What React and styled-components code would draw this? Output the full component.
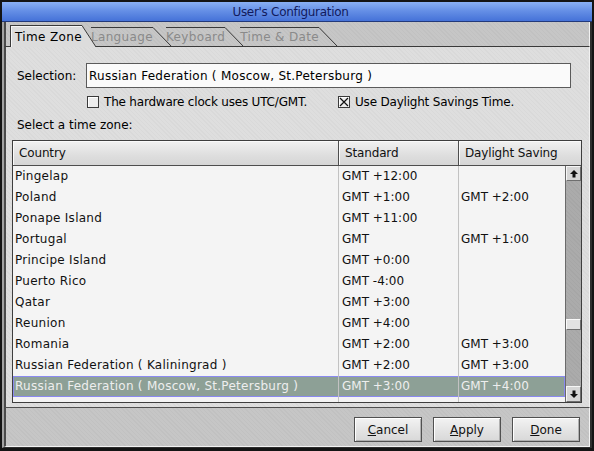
import React from "react";
import styled, { createGlobalStyle, css } from "styled-components";

const GlobalStyle = createGlobalStyle`
  html, body { margin: 0; padding: 0; background: #101010; }
  body {
    font-family: "DejaVu Sans", "Liberation Sans", sans-serif;
    font-size: 12px;
    color: #000;
  }
  * { box-sizing: border-box; }
`;

const lightTex =
  "repeating-linear-gradient(45deg, #d9d9d9 0px, #d9d9d9 1px, #dedede 1px, #dedede 3px)";
const midTex =
  "repeating-linear-gradient(45deg, #c1c1c1 0px, #c1c1c1 1px, #c6c6c6 1px, #c6c6c6 3px)";
const trackTex =
  "repeating-linear-gradient(45deg, #a6a6a6 0px, #a6a6a6 1px, #ababab 1px, #ababab 3px)";

const Window = styled.div`
  width: 594px;
  height: 451px;
  border: 2px solid #141414;
  border-bottom-width: 3px;
  display: flex;
  flex-direction: column;
  background: #c4c4c4;
`;

const TitleBar = styled.div`
  flex: none;
  height: 20px;
  display: flex;
  align-items: center;
  justify-content: center;
  padding-right: 13px;
  background: linear-gradient(#8ab0f4 0%, #6690e6 45%, #4572d8 100%);
  border-bottom: 1px solid #22397a;
  color: #121a5c;
  font-size: 12px;
  letter-spacing: -0.3px;
  line-height: 1;
`;

const Body = styled.div`
  flex: 1;
  min-height: 0;
  display: flex;
  flex-direction: column;
  border-left: 2px solid #a2a2a2;
  border-right: 2px solid #2e2e2e;
  border-bottom: 1px solid #2e2e2e;
`;

const TabBar = styled.div`
  flex: none;
  height: 25px;
  display: flex;
  align-items: flex-end;
  padding-left: 4px;
  background: ${midTex};
  border-left: 2px solid #4a4a4a;
  border-right: 1px solid #f2f2f2;
  border-bottom: 1px solid #3a3a3a;
`;

const TabItem = styled.div`
  flex: none;
  display: flex;
  align-items: stretch;
  height: ${(p) => (p.$active ? 22 : 19)}px;
  margin-left: ${(p) => p.$shift}px;
  margin-bottom: ${(p) => (p.$active ? -1 : 0)}px;
  position: relative;
  z-index: ${(p) => (p.$active ? 2 : 1)};
`;

const TabLabel = styled.div`
  display: flex;
  align-items: center;
  border-top: 1px solid #3a3a3a;
  letter-spacing: 0.35px;
  ${(p) =>
    p.$active
      ? css`
          padding: 0 0 0 4px;
          background: #dcdcdc;
          border-left: 1px solid #3a3a3a;
          box-shadow: inset 1px 1px 0 #f6f6f6;
          color: #000;
        `
      : css`
          padding: 0 0 1px 0;
          background: transparent;
          color: #8a8a8a;
        `}
`;

const SlantSvg = styled.svg`
  display: block;
  flex: none;
`;

function Slant({ active, w, h }) {
  return (
    <SlantSvg width={w} height={h} viewBox={`0 0 ${w} ${h}`}>
      {active && <polygon points={`0,0 ${w},${h} 0,${h}`} fill="#dcdcdc" />}
      <line x1="0" y1="0.5" x2={w} y2={h} stroke="#3a3a3a" strokeWidth="1" />
    </SlantSvg>
  );
}

const Panel = styled.div`
  flex: 1;
  min-height: 0;
  display: flex;
  flex-direction: column;
  background: ${lightTex};
  border-left: 2px solid #4a4a4a;
  border-right: 1px solid #f2f2f2;
  border-bottom: 1px solid #4e4e4e;
  padding: 16px 7px 4px 6px;
`;

const FieldRow = styled.div`
  display: flex;
  align-items: center;
  margin-right: 11px;
`;

const FieldLabel = styled.div`
  width: 74px;
  padding-left: 5px;
  flex: none;
`;

const TextField = styled.input`
  flex: 1;
  height: 25px;
  border: 1px solid #5a5a5a;
  background: #fafafa;
  padding: 0 2px;
  font: inherit;
  font-size: 12px;
  letter-spacing: 0.27px;
  color: #000;
  outline: none;
`;

const CheckRow = styled.div`
  display: flex;
  align-items: center;
  height: 14px;
  margin-top: 7px;
  padding-left: 75px;
`;

const CheckItem = styled.div`
  display: flex;
  align-items: center;
  gap: 5px;
  letter-spacing: -0.2px;
  width: ${(p) => (p.$width ? `${p.$width}px` : "auto")};
`;

const Box = styled.span`
  width: 12px;
  height: 12px;
  flex: none;
  border: 1px solid #3a3a3a;
  background: #ececec;
  box-shadow: inset 1px 1px 0 #ffffff;
  display: flex;
  align-items: center;
  justify-content: center;
`;

function CheckBox({ checked }) {
  return (
    <Box>
      {checked && (
        <svg width="10" height="10" viewBox="0 0 10 10">
          <path d="M1 1 L9 9 M9 1 L1 9" stroke="#111" strokeWidth="1.2" />
        </svg>
      )}
    </Box>
  );
}

const SectionLabel = styled.div`
  margin-top: 9px;
  padding-left: 5px;
  line-height: 14px;
`;

const Table = styled.div`
  flex: 1;
  min-height: 0;
  margin-top: 8px;
  display: flex;
  flex-direction: column;
  border: 1px solid #3e3e3e;
  background: #f4f4f4;
`;

const HeaderRow = styled.div`
  flex: none;
  display: grid;
  grid-template-columns: 326px 120px 1fr;
  height: 25px;
  border-bottom: 1px solid #4e4e4e;
  background: linear-gradient(#f1f1f1, #dedede 60%, #d6d6d6);
`;

const HeaderCell = styled.div`
  display: flex;
  align-items: center;
  padding-left: 6px;
  letter-spacing: -0.15px;
  border-right: ${(p) => (p.$last ? "0" : "1px solid #4e4e4e")};
  box-shadow: inset 1px 1px 0 #fafafa;
  color: #111;
`;

const TableBody = styled.div`
  flex: 1;
  min-height: 0;
  display: flex;
`;

const Rows = styled.div`
  flex: 1;
  min-width: 0;
  display: flex;
  flex-direction: column;
  overflow: hidden;
`;

const Row = styled.div`
  flex: none;
  display: grid;
  grid-template-columns: 326px 120px 1fr;
  height: 21px;
  color: #111;
  ${(p) =>
    p.$selected &&
    css`
      background: #8da096;
      color: #eeeeee;
      box-shadow: inset 0 0 0 1px #8a8af0;
    `}
`;

const FillerRow = styled(Row)`
  flex: 1;
  height: auto;
`;

const Cell = styled.div`
  display: flex;
  align-items: center;
  padding-left: ${(p) => p.$pad || 2}px;
  padding-bottom: 1px;
  white-space: nowrap;
  letter-spacing: ${(p) => (p.$wide ? "0.27px" : "0")};
  border-right: ${(p) => (p.$last ? "0" : "1px solid #c2c2c2")};
`;

const Scrollbar = styled.div`
  flex: none;
  width: 16px;
  display: flex;
  flex-direction: column;
  border-left: 1px solid #6a6a6a;
  background: ${trackTex};
`;

const ScrollButton = styled.div`
  flex: none;
  height: ${(p) => p.$h}px;
  display: flex;
  align-items: center;
  justify-content: center;
  background: #d6d6d6;
  border: 1px solid;
  border-color: #f6f6f6 #6e6e6e #6e6e6e #f6f6f6;
`;

const Track = styled.div`
  flex: 1;
  min-height: 0;
  display: flex;
  flex-direction: column;
`;

const Thumb = styled.div`
  flex: none;
  height: 11px;
  background: #e2e2e2;
  border: 1px solid;
  border-color: #fafafa #6e6e6e #6e6e6e #fafafa;
`;

function Arrow({ down }) {
  return (
    <svg width="8" height="8" viewBox="0 0 8 8" style={down ? { transform: "rotate(180deg)" } : undefined}>
      <polygon points="4,0 8,4 5.5,4 5.5,7.5 2.5,7.5 2.5,4 0,4" fill="#111" />
    </svg>
  );
}

const ButtonBar = styled.div`
  flex: none;
  height: 39px;
  display: flex;
  justify-content: flex-end;
  align-items: flex-start;
  gap: 11px;
  padding: 9px 9px 0 0;
  background: ${midTex};
  border-left: 2px solid #4a4a4a;
  border-right: 1px solid #f2f2f2;
  border-bottom: 1px solid #f2f2f2;
`;

const Button = styled.button`
  width: 68px;
  height: 25px;
  padding: 0;
  font: inherit;
  font-size: 12px;
  color: #111;
  background: linear-gradient(#f3f3f3, #e2e2e2 60%, #d8d8d8);
  border: 1px solid #505050;
  box-shadow: inset 1px 1px 0 #ffffff, inset -1px -1px 0 #b0b0b0;
  cursor: pointer;
`;

const tabs = [
  { label: "Time Zone", active: true, shift: 0 },
  { label: "Language", shift: -5 },
  { label: "Keyboard", shift: -5 },
  { label: "Time & Date", shift: -3 },
];

const zones = [
  ["Pingelap", "GMT +12:00", ""],
  ["Poland", "GMT +1:00", "GMT +2:00"],
  ["Ponape Island", "GMT +11:00", ""],
  ["Portugal", "GMT", "GMT +1:00"],
  ["Principe Island", "GMT +0:00", ""],
  ["Puerto Rico", "GMT -4:00", ""],
  ["Qatar", "GMT +3:00", ""],
  ["Reunion", "GMT +4:00", ""],
  ["Romania", "GMT +2:00", "GMT +3:00"],
  ["Russian Federation ( Kaliningrad )", "GMT +2:00", "GMT +3:00"],
  ["Russian Federation ( Moscow, St.Petersburg )", "GMT +3:00", "GMT +4:00"],
];

const selectedIndex = 10;
const scrollFraction = 0.677;
const trackLength = 204;

export default function App() {
  const thumbTop = Math.round(trackLength * scrollFraction);
  return (
    <>
      <GlobalStyle />
      <Window>
        <TitleBar>User's Configuration</TitleBar>
        <Body>
          <TabBar>
            {tabs.map((t) => (
              <TabItem key={t.label} $active={t.active} $shift={t.shift}>
                <TabLabel $active={t.active}>{t.label}</TabLabel>
                <Slant active={t.active} w={t.active ? 14 : 18} h={t.active ? 22 : 19} />
              </TabItem>
            ))}
          </TabBar>
          <Panel>
            <FieldRow>
              <FieldLabel>Selection:</FieldLabel>
              <TextField readOnly value="Russian Federation ( Moscow, St.Petersburg )" />
            </FieldRow>
            <CheckRow>
              <CheckItem $width={251}>
                <CheckBox />
                <span>The hardware clock uses UTC/GMT.</span>
              </CheckItem>
              <CheckItem>
                <CheckBox checked />
                <span>Use Daylight Savings Time.</span>
              </CheckItem>
            </CheckRow>
            <SectionLabel>Select a time zone:</SectionLabel>
            <Table>
              <HeaderRow>
                <HeaderCell>Country</HeaderCell>
                <HeaderCell>Standard</HeaderCell>
                <HeaderCell $last>Daylight Saving</HeaderCell>
              </HeaderRow>
              <TableBody>
                <Rows>
                  {zones.map((z, i) => (
                    <Row key={z[0]} $selected={i === selectedIndex}>
                      <Cell $wide>{z[0]}</Cell>
                      <Cell $pad={3}>{z[1]}</Cell>
                      <Cell $last>{z[2]}</Cell>
                    </Row>
                  ))}
                  <FillerRow>
                    <Cell />
                    <Cell />
                    <Cell $last />
                  </FillerRow>
                </Rows>
                <Scrollbar>
                  <ScrollButton $h={15}>
                    <Arrow />
                  </ScrollButton>
                  <Track>
                    <Thumb style={{ marginTop: thumbTop }} />
                  </Track>
                  <ScrollButton $h={16}>
                    <Arrow down />
                  </ScrollButton>
                </Scrollbar>
              </TableBody>
            </Table>
          </Panel>
          <ButtonBar>
            <Button>
              <u>C</u>ancel
            </Button>
            <Button>
              <u>A</u>pply
            </Button>
            <Button>
              <u>D</u>one
            </Button>
          </ButtonBar>
        </Body>
      </Window>
    </>
  );
}
